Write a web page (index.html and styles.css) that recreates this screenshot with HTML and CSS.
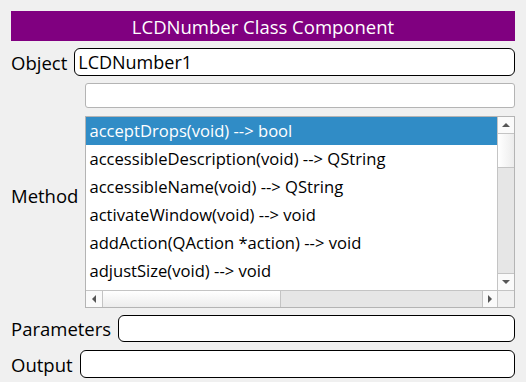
FILE: index.html
```html
<!DOCTYPE html>
<html lang="en">

<head>
    <meta charset="UTF-8">
    <title>LCDNumber Class Component</title>
    <link rel="stylesheet" href="styles.css">
</head>

<body>
    <div class="panel">
        <div class="title">LCDNumber Class Component</div>

        <div class="row">
            <label class="label">Object</label>
            <div class="field field-dark">LCDNumber1</div>
        </div>

        <div class="row">
            <label class="label">Method</label>
            <div class="method-col">
                <div class="field field-search"></div>
                <div class="list">
                    <div class="items">
                        <div class="item selected">acceptDrops(void) --&gt; bool</div>
                        <div class="item">accessibleDescription(void) --&gt; QString</div>
                        <div class="item">accessibleName(void) --&gt; QString</div>
                        <div class="item">activateWindow(void) --&gt; void</div>
                        <div class="item">addAction(QAction *action) --&gt; void</div>
                        <div class="item">adjustSize(void) --&gt; void</div>
                    </div>
                    <div class="vscroll">
                        <div class="btn btn-up"><span class="arrow up"></span></div>
                        <div class="vthumb"></div>
                        <div class="track"></div>
                        <div class="btn btn-down"><span class="arrow down"></span></div>
                    </div>
                    <div class="hscroll">
                        <div class="btn btn-left"><span class="arrow left"></span></div>
                        <div class="hthumb"></div>
                        <div class="track"></div>
                        <div class="btn btn-right"><span class="arrow right"></span></div>
                    </div>
                    <div class="corner"></div>
                </div>
            </div>
        </div>

        <div class="row">
            <label class="label">Parameters</label>
            <div class="field field-dark field-params"></div>
        </div>

        <div class="row output-row">
            <label class="label">Output</label>
            <div class="field field-dark"></div>
        </div>
    </div>
</body>

</html>
```

FILE: styles.css
```css
body {
    margin: 0;
    padding: 0;
    background-color: #f0f0f0;
    font-family: "Open Sans", "Noto Sans", sans-serif;
    font-size: 18px;
    color: #000;
}

.panel {
    padding: 11px 11px 0 11px;
    display: flex;
    flex-direction: column;
    gap: 7px;
}

.title {
    height: 30px;
    background-color: #800080;
    color: #fff;
    display: flex;
    align-items: center;
    justify-content: center;
    font-size: 18.5px;
}

.row {
    display: flex;
    align-items: center;
    gap: 7px;
}

.label {
    white-space: nowrap;
    font-size: 18.5px;
}

.field {
    flex: 1;
    box-sizing: border-box;
    background-color: #fff;
    display: flex;
    align-items: center;
}

.field-dark {
    height: 28px;
    border: 1px solid #000;
    border-radius: 6px;
    padding-left: 3px;
    font-size: 18px;
}

.field-params {
    height: 27px;
}

.output-row {
    margin-top: 1px;
}

/* search box + list under the Method label */
.method-col {
    flex: 1;
    display: flex;
    flex-direction: column;
    gap: 8px;
}

.field-search {
    flex: none;
    height: 25px;
    border: 1px solid #b4b4b4;
    border-radius: 3px;
}

.list {
    height: 192px;
    box-sizing: border-box;
    border: 1px solid #b4b4b4;
    background-color: #fff;
    display: grid;
    grid-template-columns: 1fr 17px;
    grid-template-rows: 1fr 17px;
    font-size: 16.6px;
}

.items {
    overflow: hidden;
}

.item {
    height: 28px;
    line-height: 28px;
    padding-left: 3px;
    white-space: nowrap;
}

.item.selected {
    background-color: #308cc6;
    color: #fff;
}

/* scrollbars */
.vscroll {
    display: flex;
    flex-direction: column;
    border-left: 1px solid #c4c4c4;
}

.hscroll {
    display: flex;
    border-top: 1px solid #c4c4c4;
}

.track {
    flex: 1;
    background-color: #e6e6e6;
}

.btn {
    display: flex;
    align-items: center;
    justify-content: center;
    background-color: #fafafa;
    flex: none;
}

.btn-up {
    height: 16px;
    border-bottom: 1px solid #c4c4c4;
}

.btn-down {
    height: 17px;
    border-top: 1px solid #c4c4c4;
    box-sizing: border-box;
}

.btn-left {
    width: 17px;
    border-right: 1px solid #c4c4c4;
    box-sizing: border-box;
}

.btn-right {
    width: 14px;
    border-left: 1px solid #c4c4c4;
}

.vthumb {
    height: 33px;
    border-bottom: 1px solid #c4c4c4;
    background: linear-gradient(to right, #ffffff, #ececec);
}

.hthumb {
    width: 177px;
    border-right: 1px solid #c4c4c4;
    background: linear-gradient(to bottom, #ffffff, #ececec);
}

.corner {
    border-top: 1px solid #c4c4c4;
    border-left: 1px solid #c4c4c4;
    background-color: #f0f0f0;
}

.arrow {
    width: 0;
    height: 0;
}

.arrow.up {
    border-left: 4px solid transparent;
    border-right: 4px solid transparent;
    border-bottom: 4px solid #555;
}

.arrow.down {
    border-left: 4px solid transparent;
    border-right: 4px solid transparent;
    border-top: 4px solid #555;
}

.arrow.left {
    border-top: 4px solid transparent;
    border-bottom: 4px solid transparent;
    border-right: 4px solid #555;
}

.arrow.right {
    border-top: 4px solid transparent;
    border-bottom: 4px solid transparent;
    border-left: 4px solid #555;
}
```
